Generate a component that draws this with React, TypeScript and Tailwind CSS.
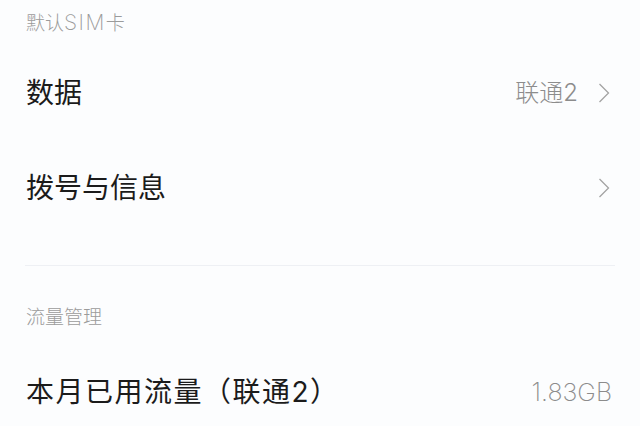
const font = { fontFamily: 'Inter, "Noto Sans CJK SC", sans-serif' }

function Chevron() {
  return (
    <svg width="12" height="20" viewBox="0 0 12 20" className="ml-[20px]">
      <polyline points="1.5,1 10.5,10 1.5,19" fill="none" stroke="#a3a3a3" strokeWidth="1.3" />
    </svg>
  )
}

function Row({ label, value, arrow, h }: { label: string; value?: string; arrow?: boolean; h: string }) {
  return (
    <div className={`flex items-center justify-between pl-[26px] pr-[30px] ${h}`}>
      <span className="text-[28px] text-[#1b1b1b] leading-none">{label}</span>
      <div className="flex items-center">
        {value && <span className="text-[24px] font-light text-[#8c8c8c] leading-none">{value}</span>}
        {arrow && <Chevron />}
      </div>
    </div>
  )
}

export default function App() {
  return (
    <main className="w-[640px] h-[426px] overflow-hidden bg-[#fcfdfe]" style={font}>
      <div className="h-[45px] flex items-center pl-[26px]">
        <span className="text-[19px] font-light text-[#9b9b9b] leading-none">
          默认<span className="text-[21px] tracking-[1.5px] font-extralight">SIM</span>卡
        </span>
      </div>
      <Row label="数据" value="联通2" arrow h="h-[96px]" />
      <Row label="拨号与信息" arrow h="h-[94px]" />
      <div className="h-[30px]" />
      <div className="mx-[25px] h-px bg-[#eef0f4]" />
      <div className="h-[74px] flex items-end pb-[10px] pl-[26px]">
        <span className="text-[19px] font-light text-[#9b9b9b] leading-[24px]">流量管理</span>
      </div>
      <div className="flex items-center justify-between pl-[26px] pr-[28px] h-[104px]">
        <span className="text-[28px] text-[#1b1b1b] leading-none tracking-[1.5px]">本月已用流量（联通2）</span>
        <span className="text-[25px] font-extralight text-[#8c8c8c] leading-none">1.83GB</span>
      </div>
    </main>
  )
}
